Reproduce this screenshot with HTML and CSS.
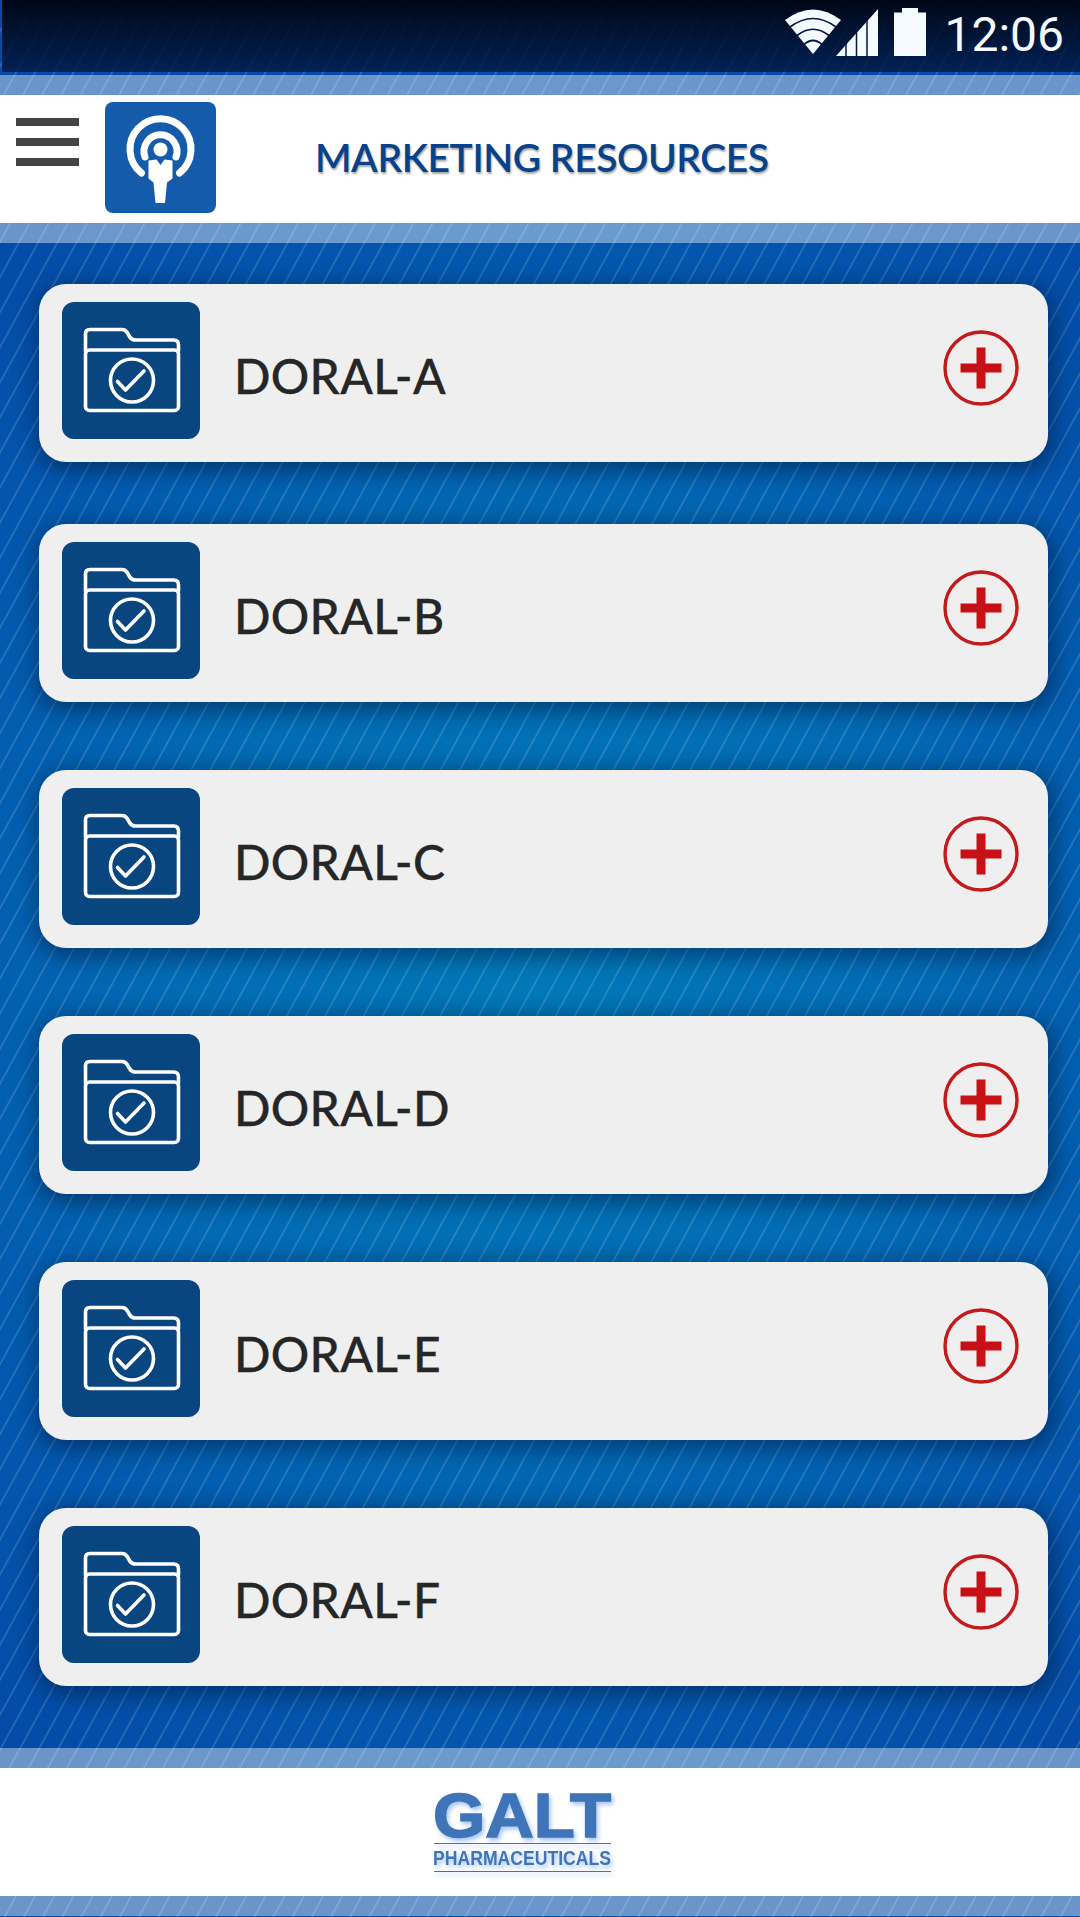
FILE: index.html
```html
<!DOCTYPE html>
<html lang="en">
<head>
    <meta charset="UTF-8">
    <meta name="viewport" content="width=device-width, initial-scale=1.0">
    <title>Marketing Resources</title>
    <link rel="stylesheet" href="styles.css">
</head>
<body>
    <!-- shared icons -->
    <svg class="sprite" width="0" height="0">
        <symbol id="icon-folder" viewBox="0 0 138 137">
            <g fill="none" stroke="#fff" stroke-width="3.6" stroke-linejoin="round" stroke-linecap="round">
                <path d="M23.500 49V32q0-4.500 4.500-4.500h32q3.500 0 5.500 3.500l2 3.500q2 3.500 6 3.500h38q5 0 5 5v6"/>
                <rect x="23.500" y="48" width="93" height="60.500" rx="4"/>
                <circle cx="70" cy="78.500" r="21.500"/>
                <path d="M55.500 79.500l8 8.500 18.500-19"/>
            </g>
        </symbol>
        <symbol id="icon-plus" viewBox="0 0 76 76">
            <circle cx="38" cy="38" r="36" fill="none" stroke="#c41a1c" stroke-width="3.4"/>
            <path d="M33.500 17.500h9v16h16v9h-16v16h-9v-16h-16v-9h16z" fill="#c81114"/>
        </symbol>
    </svg>

    <div class="screen">
        <div class="status-bar">
            <svg class="status-icons" width="142" height="52" viewBox="0 0 142 52" fill="#f4faff">
                <path d="M0 13Q28-8 56 13L28 47z"/>
                <g fill="none" stroke="#02183f" stroke-width="1.700">
                    <path d="M5 20Q28 3 51 20"/>
                    <path d="M12 28.500Q28 16 44 28.500"/>
                    <path d="M19 37.500Q28 29.500 37 37.500"/>
                </g>
                <path d="M51 49L93 2v47z"/>
                <path d="M61 30v20M71.500 20v30M82 10v40" stroke="#02183f" stroke-width="1.500"/>
                <path d="M109 5.500h8V1h16v4.500h8V49h-32z"/>
            </svg>
            <span class="clock">12:06</span>
        </div>
        <div class="band"></div>
        <header class="header">
            <div class="menu">
                <span></span>
                <span></span>
                <span></span>
            </div>
            <svg class="podcast" width="111" height="111" viewBox="0 0 111 111">
                <rect width="111" height="111" rx="8" fill="#145cab"/>
                <g fill="none" stroke="#fff" stroke-width="7" stroke-linecap="round">
                    <path d="M36.500 71A30.500 30.500 0 1 1 74.500 71"/>
                    <path d="M40 55A16.500 16.500 0 1 1 71 55"/>
                </g>
                <circle cx="55.500" cy="47.500" r="7" fill="#fff"/>
                <path d="M43.500 58.500l8-1 4 5.500 4-5.500 8 1v18l-5.500 4-2 20.500H50.500l-2-20.500-5-4z" fill="#fff"/>
            </svg>
            <h1>MARKETING RESOURCES</h1>
        </header>
        <div class="band"></div>

        <main class="list">
            <div class="card">
                <svg class="folder"><use href="#icon-folder"/></svg>
                <span class="name">DORAL-A</span>
                <svg class="plus"><use href="#icon-plus"/></svg>
            </div>
            <div class="card">
                <svg class="folder"><use href="#icon-folder"/></svg>
                <span class="name">DORAL-B</span>
                <svg class="plus"><use href="#icon-plus"/></svg>
            </div>
            <div class="card">
                <svg class="folder"><use href="#icon-folder"/></svg>
                <span class="name">DORAL-C</span>
                <svg class="plus"><use href="#icon-plus"/></svg>
            </div>
            <div class="card">
                <svg class="folder"><use href="#icon-folder"/></svg>
                <span class="name">DORAL-D</span>
                <svg class="plus"><use href="#icon-plus"/></svg>
            </div>
            <div class="card">
                <svg class="folder"><use href="#icon-folder"/></svg>
                <span class="name">DORAL-E</span>
                <svg class="plus"><use href="#icon-plus"/></svg>
            </div>
            <div class="card">
                <svg class="folder"><use href="#icon-folder"/></svg>
                <span class="name">DORAL-F</span>
                <svg class="plus"><use href="#icon-plus"/></svg>
            </div>
        </main>

        <div class="band"></div>
        <footer class="footer">
            <svg class="logo" width="190" height="100" viewBox="0 0 190 100">
                <g fill="#3f75b8">
                    <text class="logo-name" x="4" y="56.500" textLength="178" lengthAdjust="spacingAndGlyphs">GALT</text>
                    <text class="logo-sub" x="4" y="85" textLength="178" lengthAdjust="spacingAndGlyphs">PHARMACEUTICALS</text>
                    <path d="M5 63h177v1H5zM5 91h177v1H5z"/>
                </g>
            </svg>
        </footer>
        <div class="band"></div>
    </div>
</body>
</html>
```

FILE: styles.css
```css
* {
    box-sizing: border-box;
}

body {
    margin: 0;
    font-family: Lato, "Liberation Sans", sans-serif;
}

.sprite {
    display: block;
}

/* diagonal stripes over a blue glow */
.screen {
    width: 1080px;
    height: 1917px;
    padding-bottom: 1px;
    display: flex;
    flex-direction: column;
    overflow: hidden;
    background:
        repeating-linear-gradient(118.7deg, rgba(255, 255, 255, 0) 0, rgba(255, 255, 255, 0) 13.8px, rgba(255, 255, 255, 0.15) 14.8px, rgba(255, 255, 255, 0.15) 15.6px, rgba(255, 255, 255, 0) 16.6px, rgba(255, 255, 255, 0) 16.84px),
        radial-gradient(ellipse 860px 960px at 540px 980px, #0079b9 0%, #026ab4 45%, #0355ad 80%, #034ba7 100%);
}

.status-bar {
    height: 72px;
    margin-left: 2px;
    margin-bottom: 3px;
    flex: none;
    display: flex;
    justify-content: flex-end;
    align-items: flex-start;
    padding: 7px 16px 0 0;
    background: linear-gradient(rgba(0, 5, 18, 0.97), rgba(0, 20, 60, 0.76));
}

.status-icons {
    margin-right: 17px;
}

.clock {
    margin-top: 1px;
    font-family: Roboto, sans-serif;
    font-size: 48px;
    line-height: 54px;
    color: #f4faff;
}

.band {
    height: 20px;
    flex: none;
    background: rgba(255, 255, 255, 0.41);
}

.header {
    height: 128px;
    flex: none;
    display: flex;
    align-items: flex-start;
    padding: 7px 0 0 16px;
    background: #fff;
}

.menu {
    width: 63px;
    height: 48px;
    margin: 16px 26px 0 0;
    display: flex;
    flex-direction: column;
    justify-content: space-between;
}

.menu span {
    height: 8px;
    background: #444;
}

.header h1 {
    margin: 31px 0 0 99px;
    font-size: 39px;
    line-height: 48px;
    font-weight: 600;
    letter-spacing: -0.45px;
    white-space: nowrap;
    color: #07428b;
    text-shadow: 1px 2px 2px rgba(0, 0, 0, 0.35);
}

.list {
    flex: 1;
    padding: 41px 32px 0 39px;
}

.card {
    height: 178px;
    margin-bottom: 68px;
    display: flex;
    align-items: flex-start;
    padding: 18px 29.500px 0 23px;
    border-radius: 27px;
    background: #efefef;
    box-shadow: 2px 5px 22px 4px rgba(0, 25, 60, 0.52);
}

.card:first-child {
    margin-bottom: 62px;
}

.card:last-child {
    margin-bottom: 0;
}

.folder {
    width: 138px;
    height: 137px;
    border-radius: 12px;
    background: #09467f;
}

.name {
    flex: 1;
    margin: 44px 0 0 34px;
    font-size: 48px;
    line-height: 60px;
    font-weight: 500;
    letter-spacing: 0.3px;
    -webkit-text-stroke: 0.3px #262626;
    color: #262626;
}

.plus {
    width: 76px;
    height: 76px;
    margin-top: 28px;
}

.footer {
    height: 128px;
    flex: none;
    display: flex;
    justify-content: center;
    padding: 12px 32px 0 0;
    background: #fff;
}

.logo {
    overflow: visible;
    filter: drop-shadow(2px 3px 2px rgba(80, 140, 240, 0.5));
}

.logo-name {
    font: bold 63px "Liberation Sans", Arial, sans-serif;
    stroke: #3f75b8;
    stroke-width: 1.5px;
}

.logo-sub {
    font: bold 21px "Liberation Sans", Arial, sans-serif;
}
```
